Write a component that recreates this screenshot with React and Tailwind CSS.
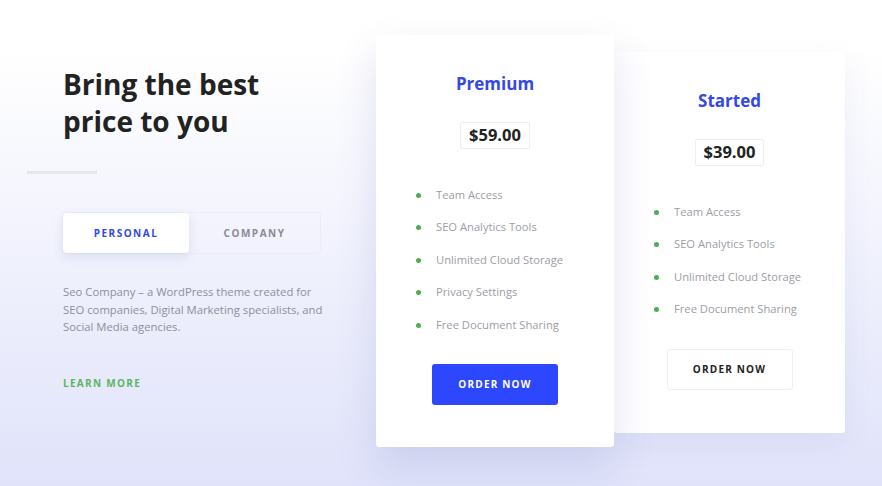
import React from 'react';

const features = {
  premium: ['Team Access', 'SEO Analytics Tools', 'Unlimited Cloud Storage', 'Privacy Settings', 'Free Document Sharing'],
  started: ['Team Access', 'SEO Analytics Tools', 'Unlimited Cloud Storage', 'Free Document Sharing'],
};

function FeatureList({ items }) {
  return (
    <ul className="mt-[37px] flex flex-col gap-[14.5px] pl-[40px]">
      {items.map(f => (
        <li key={f} className="flex items-center h-[18px] text-[11.2px] text-[#9d9da6]">
          <span className="w-[5px] h-[5px] rounded-full bg-[#4caf50] mr-[15px]" />
          {f}
        </li>
      ))}
    </ul>
  );
}

function PlanCard({ name, price, items, primary, className }) {
  return (
    <div className={`bg-white rounded-[3px] flex flex-col items-stretch ${className}`}>
      <h3 className="mt-[38px] text-center text-[17px] leading-[22px] font-bold text-[#3448e6]">{name}</h3>
      <div className="flex justify-center mt-[27px]">
        <span className="h-[27px] px-[8px] flex items-center border border-[#eeeef2] rounded-[2px] text-[16.5px] font-bold text-[#222]">{price}</span>
      </div>
      <FeatureList items={items} />
      <div className="flex justify-center mt-[30px]">
        {primary ? (
          <button className="w-[126px] h-[41px] rounded-[3px] bg-[#2d47ff] text-white text-[10px] font-bold tracking-[0.12em]">ORDER NOW</button>
        ) : (
          <button className="w-[126px] h-[41px] rounded-[3px] bg-white border border-[#eeeef2] text-[#222] text-[10px] font-bold tracking-[0.12em]">ORDER NOW</button>
        )}
      </div>
    </div>
  );
}

export default function App() {
  return (
    <div className="w-[882px] h-[486px] overflow-hidden bg-linear-to-b from-white from-10% to-[#e0e3fa] flex pl-[27px]" style={{ fontFamily: '"Open Sans", sans-serif' }}>
      <div className="w-[349px] flex flex-col items-start">
        <h1 className="ml-[36px] mt-[66px] text-[28px] leading-[37px] font-bold text-[#222]">
          Bring the best<br />price to you
        </h1>
        <div className="mt-[31px] w-[70px] h-[3px] bg-[#e6e6ec]" />
        <div className="ml-[35px] mt-[38px] w-[259px] h-[42px] flex border border-[#eceef6] rounded-[3px]">
          <button className="w-[126px] h-full bg-white rounded-[4px] shadow-[0_4px_12px_rgba(60,70,140,0.12)] text-[10px] font-bold tracking-[0.15em] text-[#3448e6]">PERSONAL</button>
          <button className="flex-1 h-full text-[10px] font-bold tracking-[0.15em] text-[#8a8a94]">COMPANY</button>
        </div>
        <p className="ml-[36px] mt-[29px] w-[262px] text-[11.3px] leading-[17.5px] text-[#8e8e9a]">
          Seo Company – a WordPress theme created for SEO companies, Digital Marketing specialists, and Social Media agencies.
        </p>
        <a className="ml-[36px] mt-[40px] text-[10px] leading-[14px] font-bold tracking-[0.13em] text-[#5cb55f]">LEARN MORE</a>
      </div>
      <div className="flex items-start">
        <PlanCard name="Premium" price="$59.00" items={features.premium} primary className="relative z-10 mt-[35px] w-[238px] h-[412px] shadow-[0_18px_40px_rgba(80,90,170,0.16)]" />
        <PlanCard name="Started" price="$39.00" items={features.started} className="mt-[52px] w-[231px] h-[381px] shadow-[0_10px_30px_rgba(80,90,170,0.08)]" />
      </div>
    </div>
  );
}
